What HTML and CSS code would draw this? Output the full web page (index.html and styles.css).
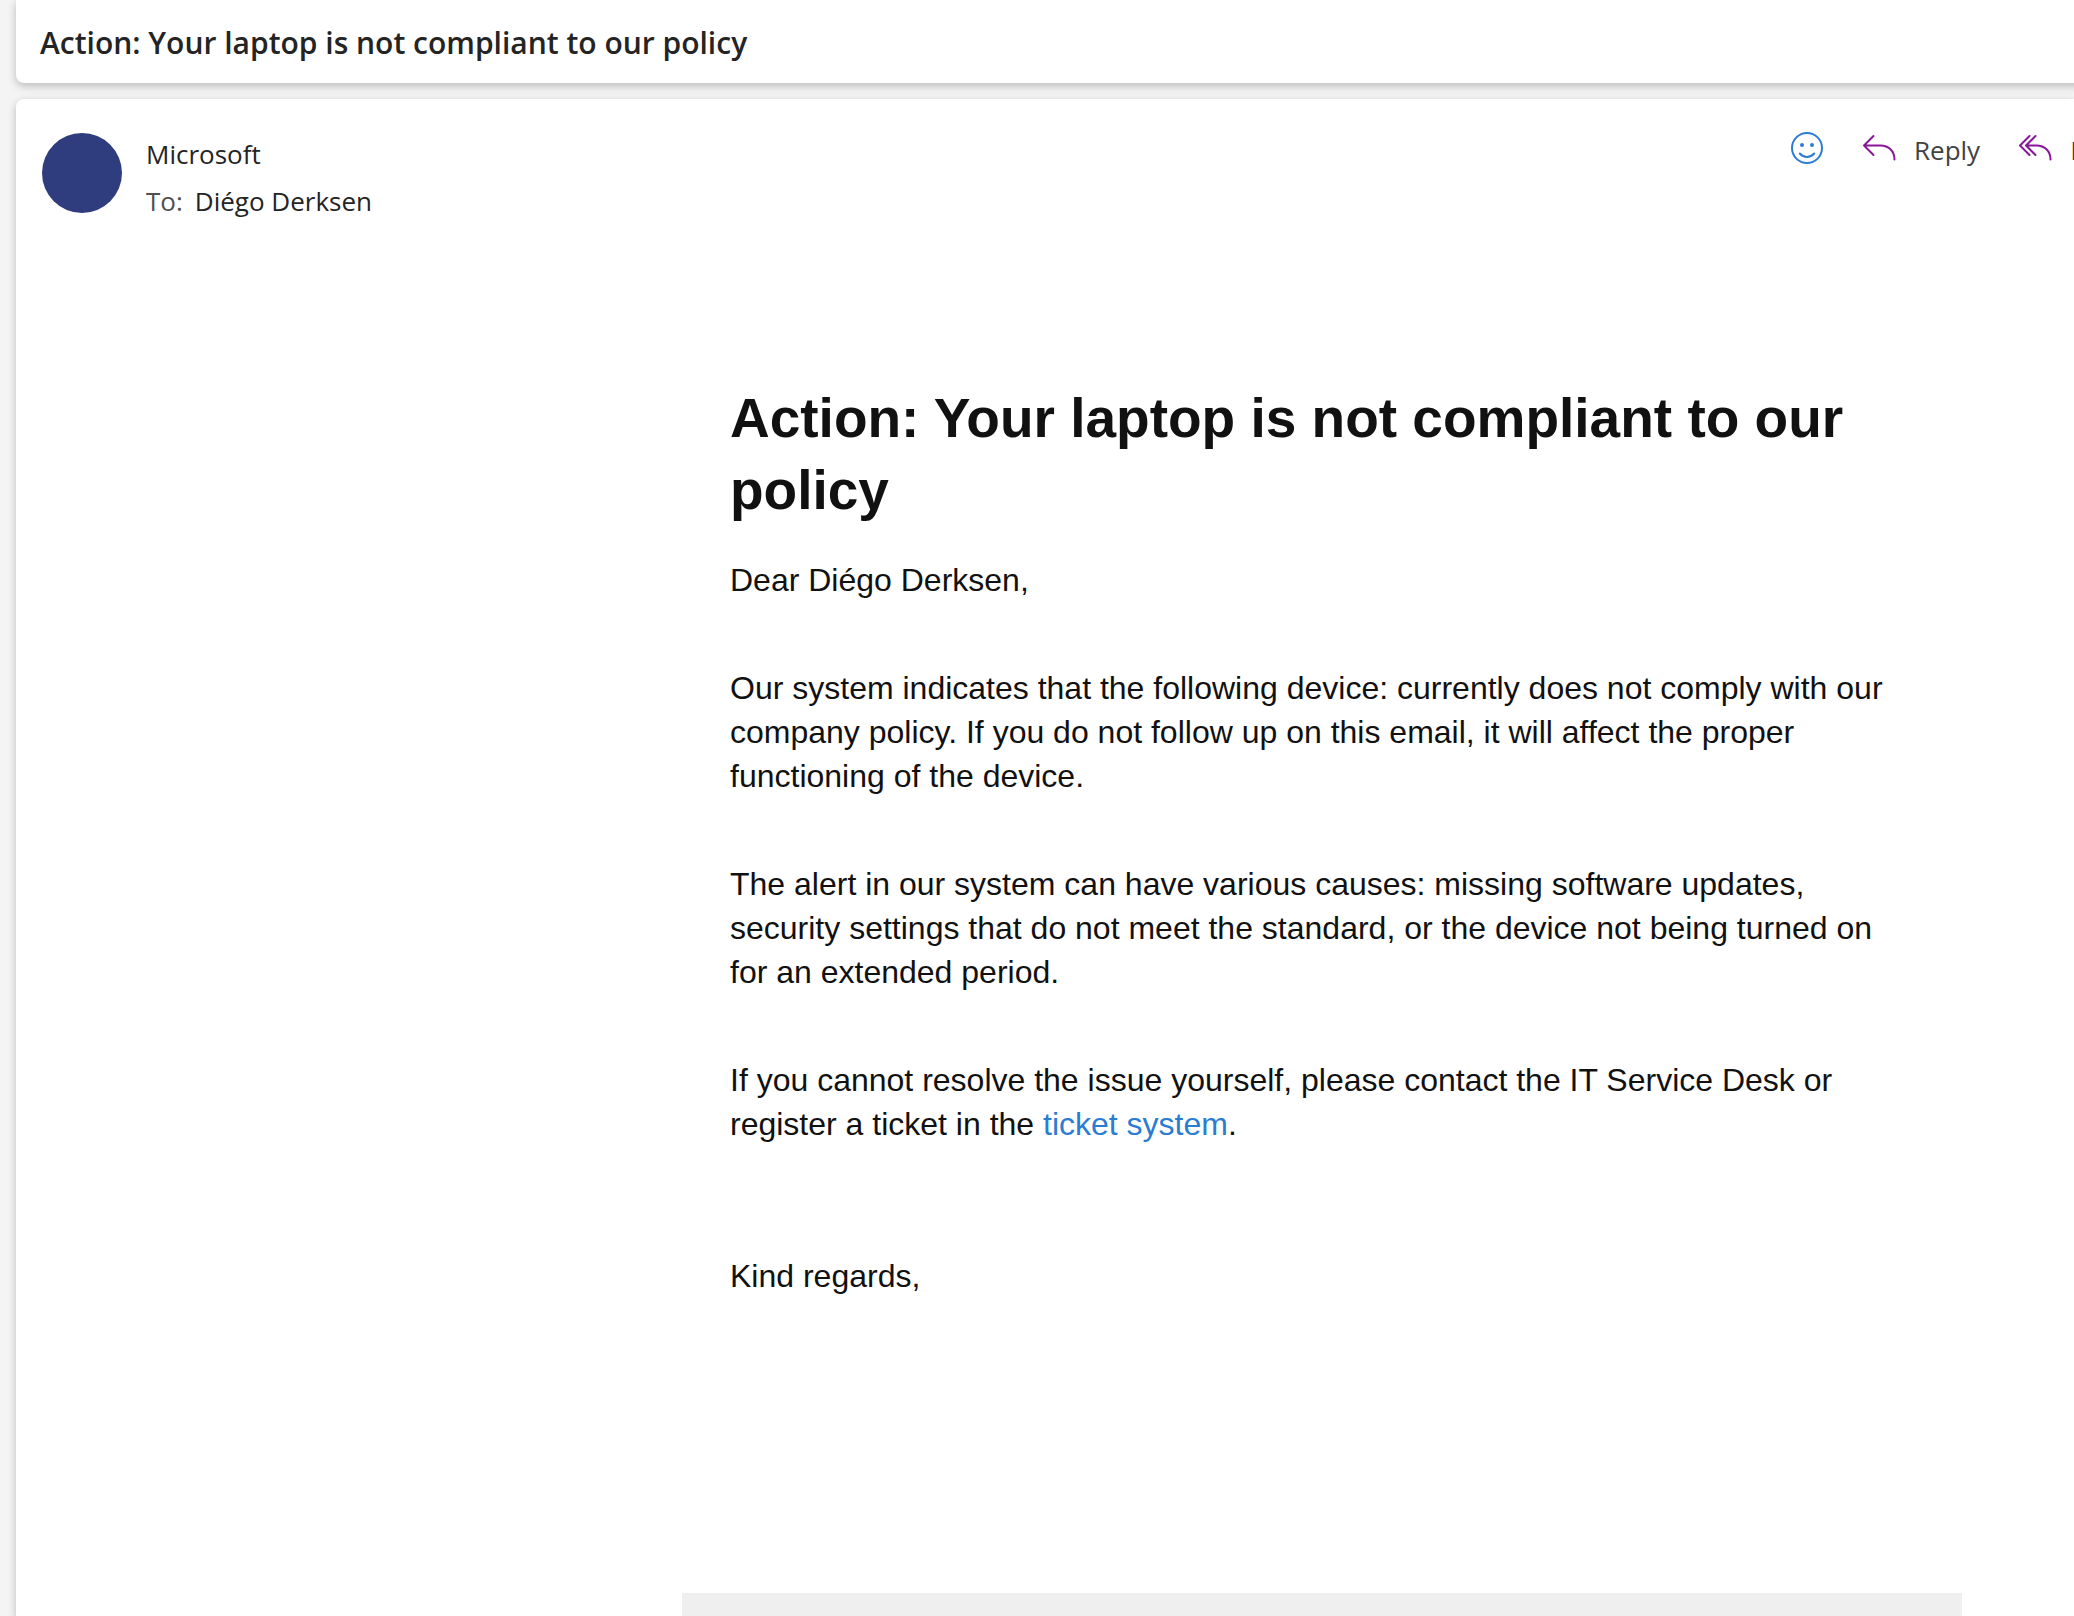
FILE: index.html
```html
<!DOCTYPE html>
<html lang="en">
<head>
<meta charset="utf-8">
<title>Action: Your laptop is not compliant to our policy</title>
<link rel="stylesheet" href="styles.css">
</head>
<body>
<header class="subject-bar">
  <h1 class="subject">Action: Your laptop is not compliant to our policy</h1>
</header>
<main class="message">
  <div class="message-head">
    <div class="avatar"></div>
    <div class="people">
      <div class="sender">Microsoft</div>
      <div class="recipient"><span class="label">To:</span><span>Diégo Derksen</span></div>
    </div>
    <div class="actions">
      <button class="action" type="button" aria-label="React">
        <svg class="icon smile" viewBox="0 0 34 34" fill="none" stroke="currentColor" stroke-width="2" stroke-linecap="round">
          <circle cx="17" cy="17" r="15"/>
          <path d="M9.800 22.500c4 4.600 10.400 4.600 14.400 0"/>
          <circle cx="12" cy="14" r="2" fill="currentColor" stroke="none"/>
          <circle cx="22" cy="14" r="2" fill="currentColor" stroke="none"/>
        </svg>
      </button>
      <button class="action" type="button">
        <svg class="icon" viewBox="0 0 34 34" fill="none" stroke="currentColor" stroke-width="2" stroke-linecap="round" stroke-linejoin="round">
          <path d="M11.500 5 2 14.500l9.500 9.500M2 14.500h16.500c8 0 14 5.500 14 14"/>
        </svg>
        <span>Reply</span>
      </button>
      <button class="action" type="button">
        <svg class="icon" viewBox="0 0 34 34" fill="none" stroke="currentColor" stroke-width="2" stroke-linecap="round" stroke-linejoin="round">
          <path d="M11.500 5 2 14.500l9.500 9.500M17.500 5 8 14.500l9.500 9.500M8 14.500h10.500c8 0 14 5.500 14 14"/>
        </svg>
        <span>Reply all</span>
      </button>
    </div>
  </div>
  <div class="email">
    <article class="content">
      <h2>Action: Your laptop is not compliant to our policy</h2>
      <p>Dear Diégo Derksen,</p>
      <p>Our system indicates that the following device: currently does not comply with our company policy. If you do not follow up on this email, it will affect the proper functioning of the device.</p>
      <p>The alert in our system can have various causes: missing software updates, security settings that do not meet the standard, or the device not being turned on for an extended period.</p>
      <p>If you cannot resolve the issue yourself, please contact the IT Service Desk or register a ticket in the <a href="#">ticket system</a>.</p>
      <p class="closing">Kind regards,</p>
    </article>
    <footer class="email-footer"></footer>
  </div>
</main>
</body>
</html>
```
FILE: styles.css
```css
* { box-sizing: border-box; }

body {
  margin: 0;
  padding-left: 16px;
  min-height: 100vh;
  display: flex;
  flex-direction: column;
  gap: 16px;
  overflow-x: hidden;
  background: #f4f4f4;
  color: #242424;
  font-family: "Segoe UI", "Open Sans", "Noto Sans", sans-serif;
}

.subject-bar,
.message {
  background: #fff;
  box-shadow: 0 3px 8px rgba(0, 0, 0, 0.24);
}

.subject-bar {
  margin-right: -16px;
  padding: 21px 24px 18px;
  border-radius: 0 0 0 8px;
}

.subject {
  margin: 0;
  font-size: 30px;
  line-height: 44px;
  font-weight: 600;
}

.message {
  flex: 1;
  display: flex;
  flex-direction: column;
  border-radius: 8px 0 0 0;
}

.message-head {
  display: flex;
  align-items: flex-start;
  gap: 24px;
  padding: 32px 0 0 26px;
}

.avatar {
  flex: none;
  width: 80px;
  height: 80px;
  margin-top: 2px;
  border-radius: 50%;
  background: #2f3c7e;
}

.people {
  flex: 1;
  font-size: 26px;
  line-height: 47px;
}

.recipient {
  display: flex;
  gap: 12px;
}

.label { color: #505050; }

.actions {
  flex: none;
  display: flex;
  gap: 38px;
  width: 284px;
  overflow: hidden;
}

.action {
  flex: none;
  display: flex;
  align-items: flex-start;
  gap: 18px;
  padding: 0;
  border: 0;
  background: none;
  color: #424242;
  font: inherit;
  font-size: 26px;
  line-height: 38px;
  white-space: nowrap;
}

.icon {
  flex: none;
  width: 34px;
  height: 34px;
  color: #881798;
}

.smile { color: #2b7cd3; }

.email {
  flex: 1;
  display: flex;
  flex-direction: column;
  width: 100%;
  max-width: 1280px;
  margin: 157px 112px 0 auto;
  color: #111;
  font-family: "Helvetica Neue", "Liberation Sans", Arial, sans-serif;
}

.content {
  flex: 1;
  padding: 0 48px 48px;
  font-size: 32px;
  line-height: 44px;
}

.content h2 {
  margin: 0 0 32px;
  font-size: 55px;
  line-height: 72px;
}

.content p { margin: 0 0 64px; }

.content .closing { margin-top: 108px; }

.content a {
  color: #2b7cd3;
  text-decoration: none;
}

.email-footer {
  height: 23px;
  background: #efefef;
}
```
